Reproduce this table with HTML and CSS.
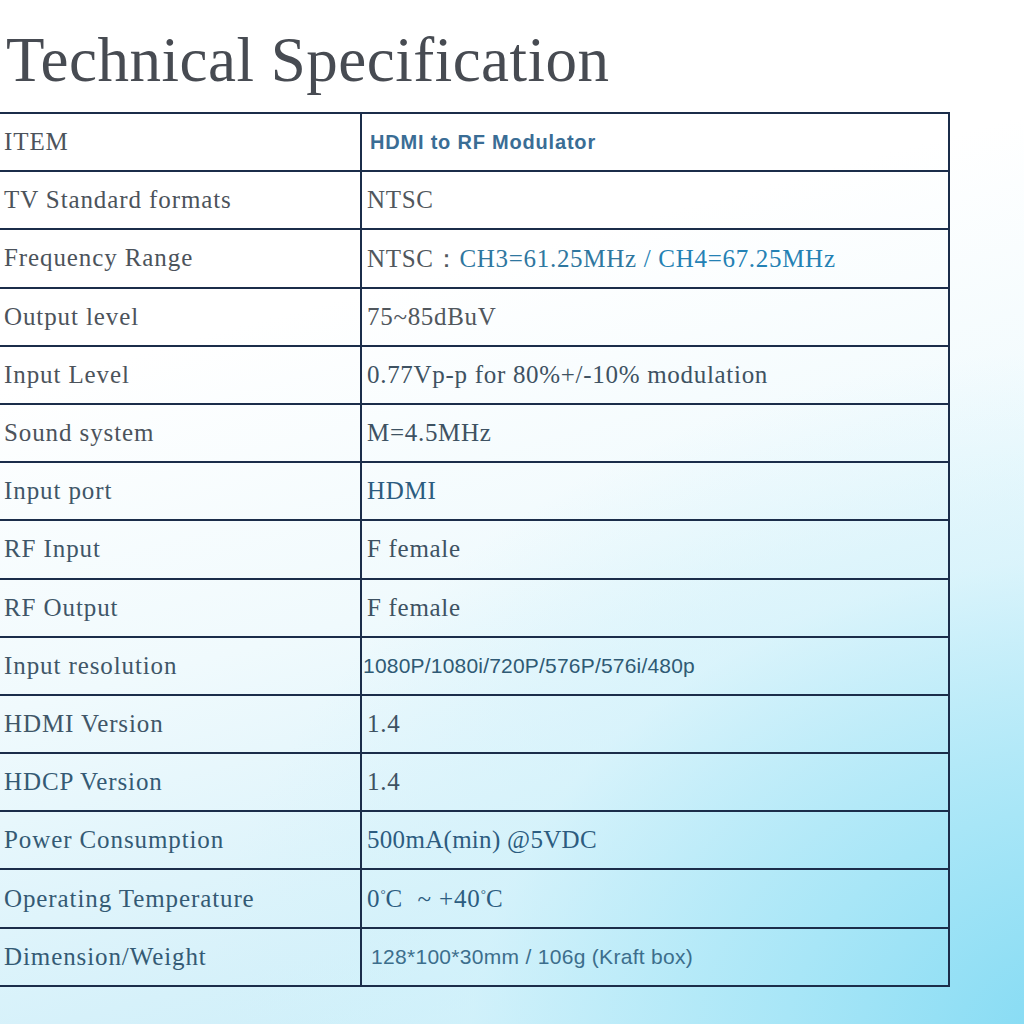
FILE: index.html
```html
<!DOCTYPE html>
<html lang="en">
<head>
<meta charset="utf-8">
<title>Technical Specification</title>
<link rel="stylesheet" href="styles.css">
</head>
<body>
<main class="page">
  <h1 class="title">Technical Specification</h1>
  <table class="spec">
    <tbody>
      <tr><td class="k">ITEM</td><td class="v sans bold head">HDMI to RF Modulator</td></tr>
      <tr><td class="k">TV Standard formats</td><td class="v grey">NTSC</td></tr>
      <tr><td class="k">Frequency Range</td><td class="v grey">NTSC：<span class="blue">CH3=61.25MHz</span> <span class="blue2">/ CH4=67.25MHz</span></td></tr>
      <tr><td class="k">Output level</td><td class="v grey">75~85dBuV</td></tr>
      <tr><td class="k">Input Level</td><td class="v slate">0.77Vp-p for 80%+/-10% modulation</td></tr>
      <tr><td class="k">Sound system</td><td class="v slate">M=4.5MHz</td></tr>
      <tr><td class="k">Input port</td><td class="v navy">HDMI</td></tr>
      <tr><td class="k">RF Input</td><td class="v slate">F female</td></tr>
      <tr><td class="k">RF Output</td><td class="v slate">F female</td></tr>
      <tr><td class="k">Input resolution</td><td class="v sans res">1080P/1080i/720P/576P/576i/480p</td></tr>
      <tr><td class="k">HDMI Version</td><td class="v slate">1.4</td></tr>
      <tr><td class="k">HDCP Version</td><td class="v slate">1.4</td></tr>
      <tr><td class="k">Power Consumption</td><td class="v navy power">500mA(min) @5VDC</td></tr>
      <tr><td class="k">Operating Temperature</td><td class="v navy temp">0<span class="deg">°</span>C&nbsp; ~ +40<span class="deg">°</span>C</td></tr>
      <tr><td class="k">Dimension/Weight</td><td class="v sans dim">128*100*30mm / 106g (Kraft box)</td></tr>
    </tbody>
  </table>
</main>
</body>
</html>
```
FILE: styles.css
```css
html, body {
  margin: 0;
  padding: 0;
}

body {
  width: 1024px;
  height: 1024px;
  overflow: hidden;
  background:
    radial-gradient(ellipse 900px 700px at 1100px 1050px, #7fd9f3 0%, #a8e6f7 35%, rgba(210, 242, 251, 0.6) 70%, rgba(255, 255, 255, 0) 100%),
    linear-gradient(165deg, #ffffff 0%, #ffffff 30%, #f0fafd 55%, #d6f1fa 80%, #c2ecf8 100%);
  font-family: "Liberation Serif", "Times New Roman", serif;
}

.page {
  display: flex;
  flex-direction: column;
}

.title {
  margin: 0;
  padding: 29px 0 0 6px;
  font-family: "Liberation Serif", "Times New Roman", serif;
  font-weight: normal;
  font-size: 63px;
  line-height: 63px;
  color: #474b52;
  letter-spacing: 0.5px;
}

.spec {
  margin-top: 20px;
  width: 950px;
  border-collapse: collapse;
  table-layout: fixed;
}

.spec tr {
  height: 58.2px;
}

.spec td {
  border-top: 2px solid #1b2d4a;
  border-bottom: 2px solid #1b2d4a;
  padding: 0;
  vertical-align: middle;
  white-space: nowrap;
}

.spec td.k {
  width: 356px;
  padding-left: 4px;
  font-size: 25px;
  color: #4c535b;
  letter-spacing: 0.9px;
  border-right: 2px solid #1b2d4a;
}

.spec td.v {
  padding-left: 5px;
  font-size: 25px;
  border-right: 2px solid #1b2d4a;
  letter-spacing: 0.7px;
}

.spec tr:nth-child(n+7) td.k { color: #3f5668; }
.spec tr:nth-child(n+12) td.k { color: #345a74; }

.sans {
  font-family: "Liberation Sans", Arial, sans-serif;
}

.spec td.head {
  font-size: 20px;
  font-weight: bold;
  color: #3a6d95;
  letter-spacing: 0.8px;
  padding-left: 8px;
}

.spec td.res {
  font-size: 21px;
  color: #2f5a74;
  letter-spacing: 0.2px;
  padding-left: 1px;
}

.spec td.dim {
  font-size: 21px;
  color: #3c6e8c;
  letter-spacing: 0.3px;
  padding-left: 9px;
}

.spec td.power {
  letter-spacing: 0.3px;
}

.spec td.temp {
  letter-spacing: 0.9px;
}

.deg {
  font-size: 13px;
  vertical-align: 9px;
  margin-right: -1px;
}

.grey { color: #51575d; }
.slate { color: #3e5262; }
.navy { color: #2c5c80; }
.blue { color: #2f779f; }
.blue2 { color: #2481b4; }
```
